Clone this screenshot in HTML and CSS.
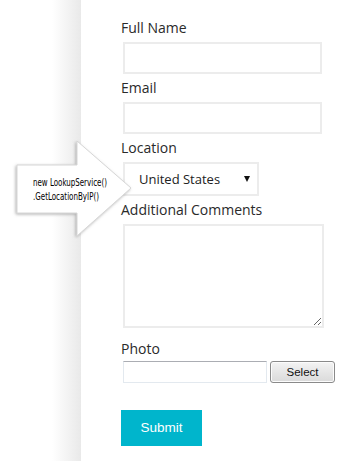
FILE: index.html
```html
<!DOCTYPE html>
<html lang="en">
<head>
  <meta charset="UTF-8">
  <title>Contact form</title>
  <link rel="stylesheet" href="styles.css">
</head>
<body>
<div class="page">
  <div class="side"></div>

  <form class="panel">
    <label class="label">Full Name</label>
    <input type="text" class="text-box">

    <label class="label">Email</label>
    <input type="text" class="text-box">

    <label class="label">Location</label>
    <div class="select">
      <span class="select-value">United States</span>
      <span class="select-arrow"></span>
    </div>

    <label class="label">Additional Comments</label>
    <textarea class="comments"></textarea>

    <label class="label">Photo</label>
    <div class="file-row">
      <div class="file-box"></div>
      <div class="file-btn">Select</div>
    </div>

    <div class="submit">Submit</div>
  </form>

  <!-- callout pointing to the location dropdown -->
  <svg class="callout" width="130" height="110" viewBox="10 135 130 110">
    <defs>
      <filter id="soft" x="-20%" y="-20%" width="140%" height="140%">
        <feDropShadow dx="-1" dy="1" stdDeviation="1.5" flood-color="#808080" flood-opacity="0.6"/>
      </filter>
    </defs>
    <polygon class="callout-shape" filter="url(#soft)"
             points="17,165 77,165 77,141 131,188 77,236 77,213 17,213"/>
    <text class="callout-text" x="33" y="186" textLength="74" lengthAdjust="spacingAndGlyphs">new LookupService()</text>
    <text class="callout-text" x="33" y="200" textLength="66" lengthAdjust="spacingAndGlyphs">.GetLocationByIP()</text>
  </svg>
</div>
</body>
</html>
```

FILE: styles.css
```css
html, body {
  margin: 0;
  padding: 0;
  background: #fff;
}

.page {
  position: relative;
  display: flex;
  width: 362px;
  height: 461px;
  overflow: hidden;
}

.side {
  width: 81px;
  flex: none;
  background: linear-gradient(to right, #ffffff 52px, #e9e9e9 81px);
}

.panel {
  flex: 1;
  display: flex;
  flex-direction: column;
  align-items: flex-start;
  padding: 18px 0 0 40px;
  background: #fff;
  font-family: 'Open Sans', sans-serif;
  color: #2a2a2a;
}

.label {
  display: block;
  font-size: 14px;
  line-height: 19px;
  margin-bottom: 5px;
}

.text-box {
  box-sizing: border-box;
  display: block;
  width: 199px;
  height: 32px;
  margin: 0 0 4px 2px;
  border: 2px solid #ececec;
  background: #fff;
  outline: none;
}

.select {
  box-sizing: border-box;
  display: flex;
  align-items: center;
  justify-content: space-between;
  width: 136px;
  height: 34px;
  margin: 0 0 4px 2px;
  padding: 0 7px 0 14px;
  border: 2px solid #ececec;
  font-size: 13px;
  color: #222;
}

.select-arrow {
  width: 0;
  height: 0;
  border-left: 3.5px solid transparent;
  border-right: 3.5px solid transparent;
  border-top: 6px solid #111;
}

.comments {
  box-sizing: border-box;
  display: block;
  width: 201px;
  height: 104px;
  margin: 0 0 11px 2px;
  border: 2px solid #ececec;
  outline: none;
}

.file-row {
  display: flex;
  gap: 3px;
  margin: -2px 0 0 2px;
}

.file-box {
  box-sizing: border-box;
  width: 144px;
  height: 22px;
  border: 1px solid #e3e9ef;
  border-top-color: #abadb3;
  background: #fff;
}

.file-btn {
  box-sizing: border-box;
  width: 65px;
  height: 22px;
  border: 1px solid #8a8a8a;
  border-radius: 3px;
  background: linear-gradient(to bottom, #f4f4f4, #e6e6e6 50%, #dadada);
  box-shadow: inset 0 0 0 1px #fcfcfc;
  font-family: 'Liberation Sans', Arial, sans-serif;
  font-size: 11.5px;
  line-height: 20px;
  text-align: center;
  color: #111;
}

.submit {
  width: 81px;
  height: 36px;
  margin-top: 27px;
  background: #00b5cc;
  color: #fff;
  font-family: 'Liberation Sans', Arial, sans-serif;
  font-size: 13.5px;
  line-height: 36px;
  text-align: center;
}

.callout {
  position: absolute;
  left: 10px;
  top: 135px;
}

.callout-shape {
  fill: #fff;
  stroke: #d6d6d6;
  stroke-width: 1;
}

.callout-text {
  font-family: 'DejaVu Sans', sans-serif;
  font-stretch: condensed;
  font-size: 11px;
  fill: #000;
}
```
